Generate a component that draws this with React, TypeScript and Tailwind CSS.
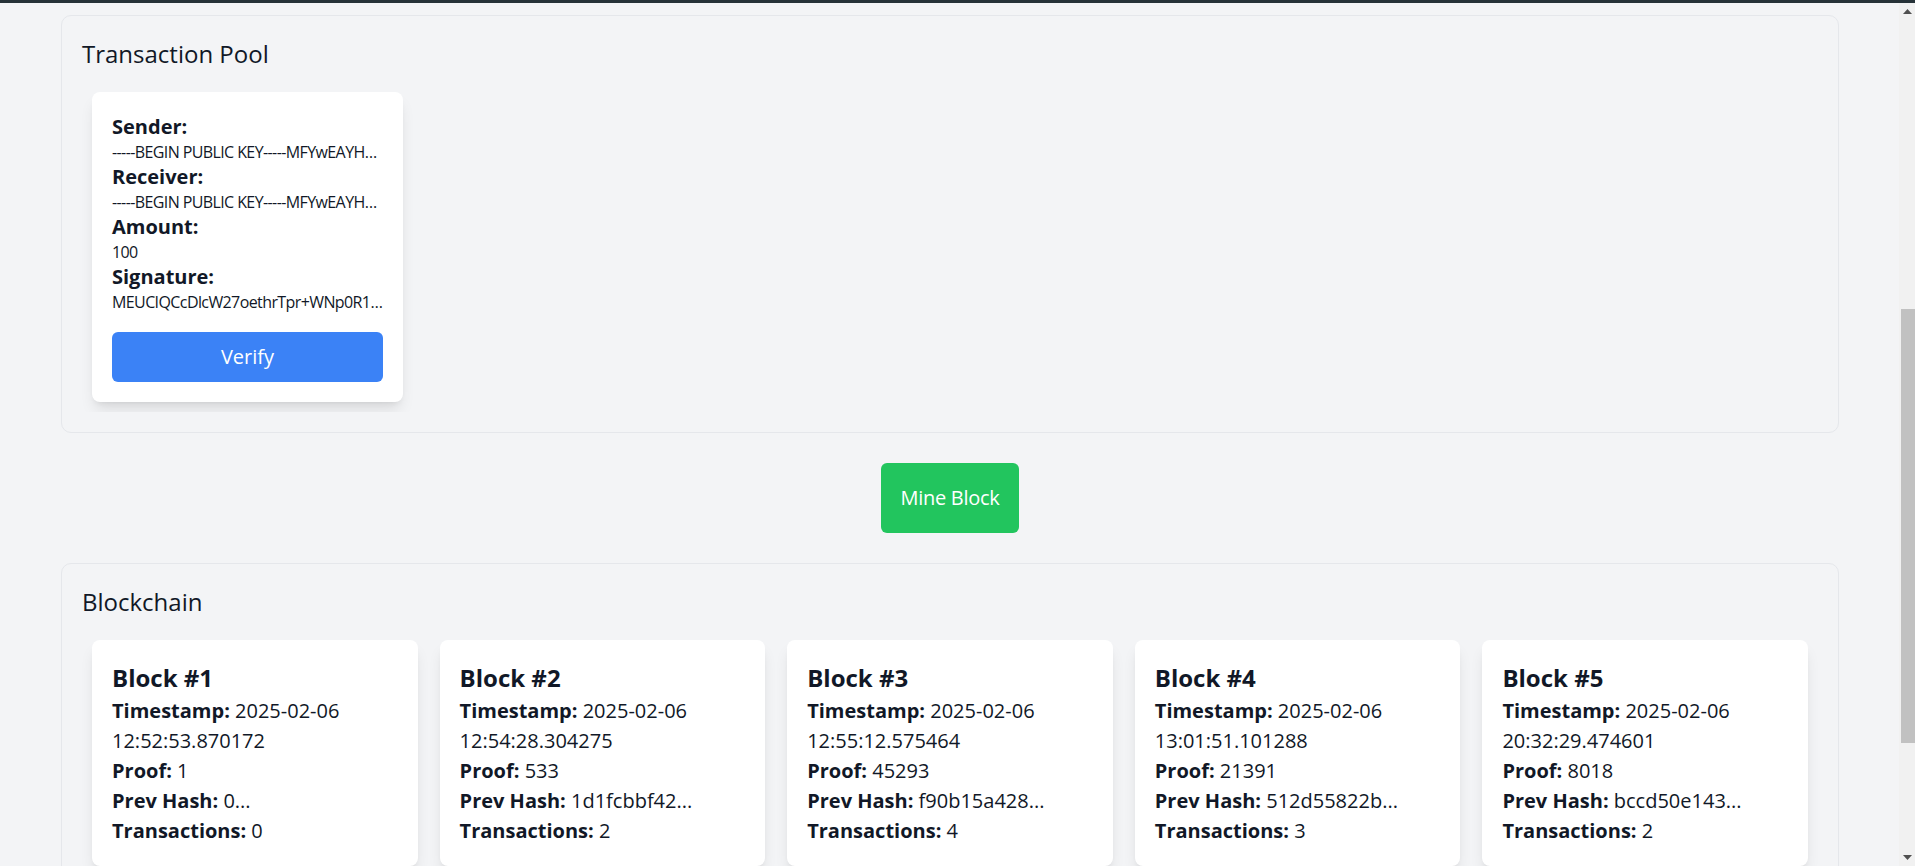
import React from "react";

const blocks = [
  { n: 1, date: "2025-02-06", time: "12:52:53.870172", proof: "1", prev: "0...", tx: "0" },
  { n: 2, date: "2025-02-06", time: "12:54:28.304275", proof: "533", prev: "1d1fcbbf42...", tx: "2" },
  { n: 3, date: "2025-02-06", time: "12:55:12.575464", proof: "45293", prev: "f90b15a428...", tx: "4" },
  { n: 4, date: "2025-02-06", time: "13:01:51.101288", proof: "21391", prev: "512d55822b...", tx: "3" },
  { n: 5, date: "2025-02-06", time: "20:32:29.474601", proof: "8018", prev: "bccd50e143...", tx: "2" },
];

const KEY =
  "-----BEGIN PUBLIC KEY-----MFYwEAYHKoZIzj0CAQYFK4EEAAoDQgAEx9kq2pXb8Yy7cQp3mZ";
const SIG = "MEUCIQCcDlcW27oethrTpr+WNp0R19aZkPq3XtYw8nVb2Lr0fQIgT5";

function Field({ label, value }: { label: string; value: string }) {
  return (
    <div>
      <div className="text-[20px] leading-[30px] font-bold">{label}</div>
      <div className="text-[16px] leading-[20px] tracking-[-0.6px] truncate">{value}</div>
    </div>
  );
}

export default function App() {
  return (
    <div
      className="h-[866px] overflow-hidden bg-[#f3f4f6] text-[#111827] flex flex-col"
      style={{ fontFamily: '"Segoe UI", "Open Sans", "Noto Sans", sans-serif' }}
    >
      <div className="h-[3px] bg-[#263238] shrink-0" />
      <div className="flex flex-1 min-h-0">
        <div className="flex-1 min-w-0 pl-[61px] pr-[60px] pt-3">
          {/* Transaction Pool */}
          <section className="border border-[#e5e7eb] rounded-[10px] p-5">
            <h2 className="text-[24px] leading-[36px] font-normal mb-2.5">Transaction Pool</h2>
            <div className="flex gap-5 p-2.5 overflow-x-auto">
              <div className="w-[311px] shrink-0 bg-white rounded-lg shadow-lg p-5">
                <Field label="Sender:" value={KEY} />
                <Field label="Receiver:" value={KEY} />
                <Field label="Amount:" value="100" />
                <Field label="Signature:" value={SIG} />
                <button className="mt-5 w-full bg-[#3b82f6] text-white text-[20px] leading-[30px] py-2.5 rounded-md">
                  Verify
                </button>
              </div>
            </div>
          </section>

          <div className="flex justify-center my-[30px]">
            <button className="bg-[#22c55e] text-white text-[20px] leading-[30px] tracking-[-0.3px] p-5 rounded-md">
              Mine Block
            </button>
          </div>

          {/* Blockchain */}
          <section className="border border-[#e5e7eb] rounded-[10px] p-5">
            <h2 className="text-[24px] leading-[36px] font-normal mb-2.5">Blockchain</h2>
            <div className="grid grid-cols-5 gap-[22px] p-2.5">
              {blocks.map((b) => (
                <div key={b.n} className="bg-white rounded-lg shadow-lg p-5 text-[20px] leading-[30px]">
                  <h3 className="text-[24px] leading-[36px] font-bold">Block #{b.n}</h3>
                  <p>
                    <span className="font-bold">Timestamp:</span> {b.date} {b.time}
                  </p>
                  <p>
                    <span className="font-bold">Proof:</span> {b.proof}
                  </p>
                  <p>
                    <span className="font-bold">Prev Hash:</span> {b.prev}
                  </p>
                  <p>
                    <span className="font-bold">Transactions:</span> {b.tx}
                  </p>
                </div>
              ))}
            </div>
          </section>
        </div>

        {/* Scrollbar */}
        <div className="w-[16px] shrink-0 bg-[#f1f1f1] flex flex-col">
          <div className="h-[17px] flex items-center justify-center">
            <svg width="9" height="5" viewBox="0 0 9 5">
              <polygon points="4.5,0 9,5 0,5" fill="#505050" />
            </svg>
          </div>
          <div className="h-[289px]" />
          <div className="h-[434px] ml-[2px] bg-[#c1c1c1]" />
          <div className="flex-1" />
          <div className="h-[17px] flex items-center justify-center">
            <svg width="9" height="5" viewBox="0 0 9 5">
              <polygon points="0,0 9,0 4.5,5" fill="#505050" />
            </svg>
          </div>
        </div>
      </div>
    </div>
  );
}
